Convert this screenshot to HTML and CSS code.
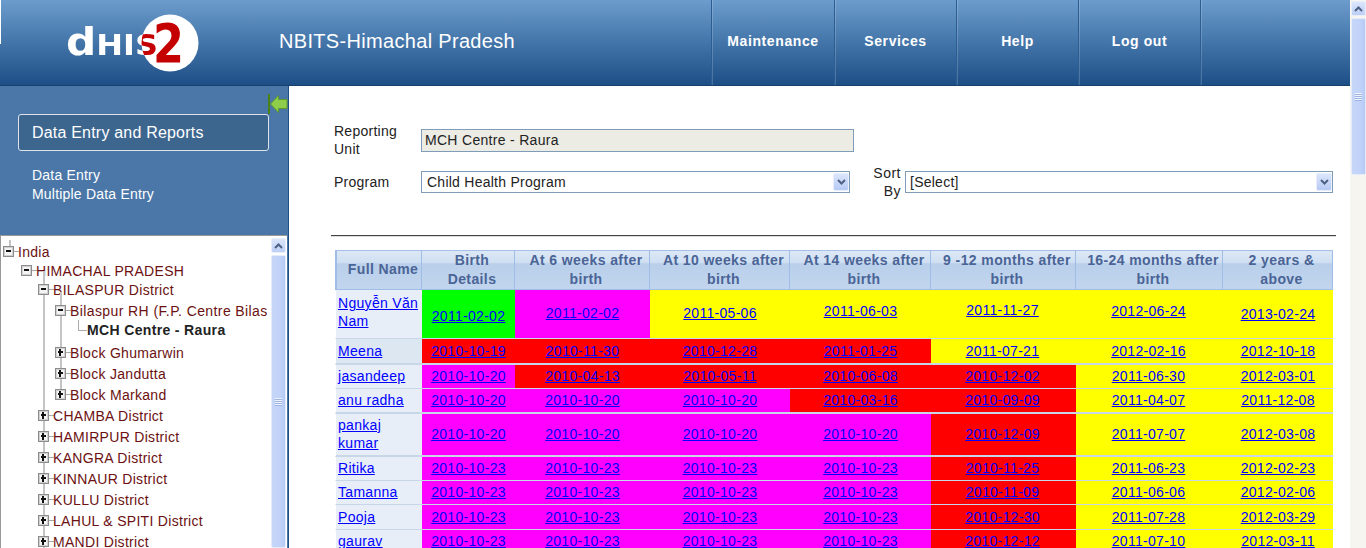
FILE: index.html
```html
<!DOCTYPE html>
<html lang="en">
<head>
    <meta charset="UTF-8">
    <title>NBITS-Himachal Pradesh</title>
    <link rel="stylesheet" href="styles.css">
</head>
<body>
<div class="page">
    <header class="header">
        <span class="corner-mark"></span>
        <div class="logo">
            <svg width="134" height="60" viewBox="0 0 134 60">
                <defs>
                    <clipPath id="logoCircle"><circle cx="104" cy="30" r="28.5"/></clipPath>
                </defs>
                <text class="logo-word" x="0" y="42" textLength="92" lengthAdjust="spacingAndGlyphs">d<tspan class="logo-caps">HIS</tspan></text>
                <circle cx="104" cy="30" r="28.5" fill="#fff"/>
                <g clip-path="url(#logoCircle)">
                    <text class="logo-word logo-word-red" x="0" y="42" textLength="92" lengthAdjust="spacingAndGlyphs">d<tspan class="logo-caps">HIS</tspan></text>
                </g>
                <text class="logo-two" x="87" y="49" textLength="31" lengthAdjust="spacingAndGlyphs">2</text>
            </svg>
        </div>
        <div class="title">NBITS-Himachal Pradesh</div>
        <nav class="nav">
            <a class="nav-item" href="#">Maintenance</a>
            <a class="nav-item" href="#">Services</a>
            <a class="nav-item" href="#">Help</a>
            <a class="nav-item" href="#">Log out</a>
            <span class="nav-item nav-end"></span>
        </nav>
    </header>

    <div class="content">
        <aside class="sidebar">
            <div class="side-top">
                <svg class="collapse-icon" width="20" height="20" viewBox="0 0 20 20">
                    <rect x="0" y="0" width="2" height="20" fill="#4c8018"/>
                    <polygon points="2.5,10 10.5,1.5 10.5,5.5 19,5.5 19,14.5 10.5,14.5 10.5,18.5" fill="#8fce4b" stroke="#5f9a26"/>
                </svg>
                <div class="menu-title">Data Entry and Reports</div>
                <a class="side-link" href="#">Data Entry</a>
                <a class="side-link" href="#">Multiple Data Entry</a>
            </div>
            <div class="tree-panel">
                <div class="tree">
                    <span class="top-stub"></span>
                    <div class="tree-row"><span class="box minus"></span><span class="dash"></span><a href="#">India</a></div>
                    <ul>
                        <li><div class="tree-row"><span class="box minus"></span><span class="dash"></span><a href="#">HIMACHAL PRADESH</a></div>
                            <ul class="lined">
                                <li><div class="tree-row"><span class="box minus"></span><span class="dash"></span><a href="#">BILASPUR District</a></div>
                                    <ul class="lined lined-end">
                                        <li><div class="tree-row gap-small wide-row"><span class="box minus"></span><span class="dash"></span><a href="#">Bilaspur RH (F.P. Centre Bilaspur)</a></div>
                                            <ul>
                                                <li><div class="tree-row"><span class="leaf"></span><a class="current" href="#">MCH Centre - Raura</a></div></li>
                                            </ul>
                                        </li>
                                        <li><div class="tree-row tall gap-large"><span class="box plus"></span><span class="dash"></span><a href="#">Block Ghumarwin</a></div></li>
                                        <li><div class="tree-row tall"><span class="box plus"></span><span class="dash"></span><a href="#">Block Jandutta</a></div></li>
                                        <li><div class="tree-row tall"><span class="box plus"></span><span class="dash"></span><a href="#">Block Markand</a></div></li>
                                    </ul>
                                </li>
                                <li><div class="tree-row tall"><span class="box plus"></span><span class="dash"></span><a href="#">CHAMBA District</a></div></li>
                                <li><div class="tree-row tall"><span class="box plus"></span><span class="dash"></span><a href="#">HAMIRPUR District</a></div></li>
                                <li><div class="tree-row tall"><span class="box plus"></span><span class="dash"></span><a href="#">KANGRA District</a></div></li>
                                <li><div class="tree-row tall"><span class="box plus"></span><span class="dash"></span><a href="#">KINNAUR District</a></div></li>
                                <li><div class="tree-row tall"><span class="box plus"></span><span class="dash"></span><a href="#">KULLU District</a></div></li>
                                <li><div class="tree-row tall"><span class="box plus"></span><span class="dash"></span><a href="#">LAHUL &amp; SPITI District</a></div></li>
                                <li><div class="tree-row tall"><span class="box plus"></span><span class="dash"></span><a href="#">MANDI District</a></div></li>
                            </ul>
                        </li>
                    </ul>
                </div>
                <div class="scrollbar tree-scroll">
                    <div class="scroll-btn">
                        <svg width="9" height="6" viewBox="0 0 9 6"><path d="M1 5 L4.5 1.5 L8 5" fill="none" stroke="#4d6185" stroke-width="2"/></svg>
                    </div>
                    <div class="scroll-thumb"><span class="grip"></span></div>
                </div>
            </div>
        </aside>

        <main class="main">
            <form class="entry-form">
                <div class="form-row">
                    <label class="field-label">Reporting Unit</label>
                    <input class="unit-input" type="text" value="MCH Centre - Raura" readonly>
                </div>
                <div class="form-row">
                    <label class="field-label">Program</label>
                    <div class="select-box program-select">
                        <select><option>Child Health Program</option></select>
                        <span class="select-arrow"><svg width="9" height="6" viewBox="0 0 9 6"><path d="M1 1 L4.5 4.5 L8 1" fill="none" stroke="#4d6185" stroke-width="2"/></svg></span>
                    </div>
                    <label class="field-label sort-label">Sort By</label>
                    <div class="select-box sort-select">
                        <select><option>[Select]</option></select>
                        <span class="select-arrow"><svg width="9" height="6" viewBox="0 0 9 6"><path d="M1 1 L4.5 4.5 L8 1" fill="none" stroke="#4d6185" stroke-width="2"/></svg></span>
                    </div>
                </div>
            </form>

            <hr class="rule">

            <table class="schedule">
                <colgroup>
                    <col class="col-name"><col class="col-birth"><col class="col-6w"><col class="col-10w">
                    <col class="col-14w"><col class="col-9m"><col class="col-16m"><col class="col-2y">
                </colgroup>
                <thead>
                    <tr>
                        <th>Full Name</th>
                        <th>Birth Details</th>
                        <th>At 6 weeks after birth</th>
                        <th>At 10 weeks after birth</th>
                        <th>At 14 weeks after birth</th>
                        <th>9 -12 months after birth</th>
                        <th>16-24 months after birth</th>
                        <th>2 years &amp; above</th>
                    </tr>
                </thead>
                <tbody>
                    <tr class="row-49">
                        <td class="name"><a href="#">Nguyễn Văn Nam</a></td>
                        <td class="green low-2"><a href="#">2011-02-02</a></td>
                        <td class="magenta"><a href="#">2011-02-02</a></td>
                        <td class="yellow"><a href="#">2011-05-06</a></td>
                        <td class="yellow high-2"><a href="#">2011-06-03</a></td>
                        <td class="yellow high-3"><a href="#">2011-11-27</a></td>
                        <td class="yellow high-2"><a href="#">2012-06-24</a></td>
                        <td class="yellow low-1"><a href="#">2013-02-24</a></td>
                    </tr>
                    <tr class="row-26 thick alt flush">
                        <td class="name"><a href="#">Meena</a></td>
                        <td class="red"><a href="#">2010-10-19</a></td>
                        <td class="red"><a href="#">2010-11-30</a></td>
                        <td class="red"><a href="#">2010-12-28</a></td>
                        <td class="red"><a href="#">2011-01-25</a></td>
                        <td class="yellow"><a href="#">2011-07-21</a></td>
                        <td class="yellow"><a href="#">2012-02-16</a></td>
                        <td class="yellow"><a href="#">2012-10-18</a></td>
                    </tr>
                    <tr class="row-24">
                        <td class="name"><a href="#">jasandeep</a></td>
                        <td class="magenta"><a href="#">2010-10-20</a></td>
                        <td class="red"><a href="#">2010-04-13</a></td>
                        <td class="red"><a href="#">2010-05-11</a></td>
                        <td class="red"><a href="#">2010-06-08</a></td>
                        <td class="red"><a href="#">2010-12-02</a></td>
                        <td class="yellow"><a href="#">2011-06-30</a></td>
                        <td class="yellow"><a href="#">2012-03-01</a></td>
                    </tr>
                    <tr class="row-25 thick">
                        <td class="name"><a href="#">anu radha</a></td>
                        <td class="magenta"><a href="#">2010-10-20</a></td>
                        <td class="magenta"><a href="#">2010-10-20</a></td>
                        <td class="magenta"><a href="#">2010-10-20</a></td>
                        <td class="red"><a href="#">2010-03-16</a></td>
                        <td class="red"><a href="#">2010-09-09</a></td>
                        <td class="yellow"><a href="#">2011-04-07</a></td>
                        <td class="yellow"><a href="#">2011-12-08</a></td>
                    </tr>
                    <tr class="row-43 thick">
                        <td class="name"><a href="#">pankaj kumar</a></td>
                        <td class="magenta"><a href="#">2010-10-20</a></td>
                        <td class="magenta"><a href="#">2010-10-20</a></td>
                        <td class="magenta"><a href="#">2010-10-20</a></td>
                        <td class="magenta"><a href="#">2010-10-20</a></td>
                        <td class="red"><a href="#">2010-12-09</a></td>
                        <td class="yellow"><a href="#">2011-07-07</a></td>
                        <td class="yellow"><a href="#">2012-03-08</a></td>
                    </tr>
                    <tr class="row-24">
                        <td class="name"><a href="#">Ritika</a></td>
                        <td class="magenta"><a href="#">2010-10-23</a></td>
                        <td class="magenta"><a href="#">2010-10-23</a></td>
                        <td class="magenta"><a href="#">2010-10-23</a></td>
                        <td class="magenta"><a href="#">2010-10-23</a></td>
                        <td class="red"><a href="#">2010-11-25</a></td>
                        <td class="yellow"><a href="#">2011-06-23</a></td>
                        <td class="yellow"><a href="#">2012-02-23</a></td>
                    </tr>
                    <tr class="row-24">
                        <td class="name"><a href="#">Tamanna</a></td>
                        <td class="magenta"><a href="#">2010-10-23</a></td>
                        <td class="magenta"><a href="#">2010-10-23</a></td>
                        <td class="magenta"><a href="#">2010-10-23</a></td>
                        <td class="magenta"><a href="#">2010-10-23</a></td>
                        <td class="red"><a href="#">2010-11-09</a></td>
                        <td class="yellow"><a href="#">2011-06-06</a></td>
                        <td class="yellow"><a href="#">2012-02-06</a></td>
                    </tr>
                    <tr class="row-25 flush">
                        <td class="name"><a href="#">Pooja</a></td>
                        <td class="magenta"><a href="#">2010-10-23</a></td>
                        <td class="magenta"><a href="#">2010-10-23</a></td>
                        <td class="magenta"><a href="#">2010-10-23</a></td>
                        <td class="magenta"><a href="#">2010-10-23</a></td>
                        <td class="red"><a href="#">2010-12-30</a></td>
                        <td class="yellow"><a href="#">2011-07-28</a></td>
                        <td class="yellow"><a href="#">2012-03-29</a></td>
                    </tr>
                    <tr class="row-24">
                        <td class="name"><a href="#">gaurav</a></td>
                        <td class="magenta"><a href="#">2010-10-23</a></td>
                        <td class="magenta"><a href="#">2010-10-23</a></td>
                        <td class="magenta"><a href="#">2010-10-23</a></td>
                        <td class="magenta"><a href="#">2010-10-23</a></td>
                        <td class="red"><a href="#">2010-12-12</a></td>
                        <td class="yellow"><a href="#">2011-07-10</a></td>
                        <td class="yellow"><a href="#">2012-03-11</a></td>
                    </tr>
                </tbody>
            </table>
        </main>
    </div>
</div>

<div class="scrollbar page-scroll">
    <div class="scroll-btn">
        <svg width="9" height="6" viewBox="0 0 9 6"><path d="M1 5 L4.5 1.5 L8 5" fill="none" stroke="#4d6185" stroke-width="2"/></svg>
    </div>
    <div class="scroll-thumb"><span class="grip"></span></div>
</div>
</body>
</html>
```

FILE: styles.css
```css
/* General Styles */
* {
    box-sizing: border-box;
}

body {
    font-family: "Liberation Sans", Arial, sans-serif;
    font-size: 14px;
    margin: 0;
    height: 100vh;
    display: flex;
    overflow: hidden;
    background-color: #fff;
    color: #222;
}

.page {
    flex: 1;
    min-width: 0;
    display: flex;
    flex-direction: column;
}

/* Header */
.header {
    position: relative;
    flex: none;
    height: 86px;
    display: flex;
    align-items: center;
    background: linear-gradient(#6b9ccc, #1d4e86);
    border-bottom: 1px solid #17406f;
    color: #fff;
}

.corner-mark {
    position: absolute;
    left: 0;
    top: 0;
    width: 1px;
    height: 44px;
    background-color: #fff;
}

.logo {
    flex: none;
    width: 279px;
    padding-left: 66px;
    height: 60px;
}

.logo svg {
    display: block;
    filter: blur(0.4px);
}

.logo-word {
    font-family: "DejaVu Sans", sans-serif;
    font-size: 37px;
    font-weight: bold;
    fill: #fff;
}

.logo-word-red {
    fill: #c40000;
}

.logo-caps {
    font-size: 28px;
}

.logo-two {
    font-family: "DejaVu Sans", sans-serif;
    font-size: 53px;
    font-weight: bold;
    fill: #c40000;
}

.title {
    flex: 1;
    font-size: 20px;
    letter-spacing: 0.32px;
    padding-bottom: 2px;
}

.nav {
    flex: none;
    display: flex;
    height: 85px;
}

.nav-item {
    width: 122px;
    display: flex;
    align-items: center;
    justify-content: center;
    padding-bottom: 4px;
    color: #fff;
    font-weight: bold;
    font-size: 14px;
    letter-spacing: 0.6px;
    text-decoration: none;
    border-left: 1px solid #2c5c92;
    box-shadow: inset 1px 0 0 rgba(255, 255, 255, 0.18);
}

.nav-item:first-child {
    width: 123px;
}

.nav-end {
    width: 150px;
}

/* Layout under the header */
.content {
    flex: 1;
    min-height: 0;
    display: flex;
}

/* Sidebar */
.sidebar {
    flex: none;
    width: 289px;
    display: flex;
    flex-direction: column;
    background-color: #4a77a8;
    border-right: 1px solid #1d4e86;
}

.side-top {
    position: relative;
    flex: none;
    height: 149px;
    padding: 28px 0 0 18px;
}

.collapse-icon {
    position: absolute;
    left: 268px;
    top: 8px;
}

.menu-title {
    width: 251px;
    height: 37px;
    line-height: 35px;
    padding-left: 13px;
    font-size: 16px;
    letter-spacing: 0.2px;
    color: #fff;
    background-color: #3d668f;
    border: 1px solid #dde4ec;
    border-radius: 3px;
    margin-bottom: 15px;
}

.side-link {
    display: block;
    margin-left: 14px;
    line-height: 19px;
    letter-spacing: 0.2px;
    color: #fff;
    text-decoration: none;
}

/* Organisation tree */
.tree-panel {
    flex: 1;
    min-height: 0;
    margin-right: 1px;
    display: flex;
    background-color: #fff;
    border-top: 1px solid #999;
    border-left: 1px solid #999;
    overflow: hidden;
}

.tree {
    position: relative;
    flex: 1;
    min-width: 0;
    margin-right: 3px;
    padding: 6px 0 0 2px;
    overflow: hidden;
    white-space: nowrap;
}

.tree ul {
    list-style: none;
    margin: 0;
    padding: 0 0 0 17px;
    position: relative;
}

.tree > ul {
    padding-left: 18px;
}

.tree li {
    margin: 0;
    padding: 0;
}

.tree a {
    color: #6b1111;
    letter-spacing: 0.3px;
    text-decoration: none;
}

.tree .wide-row a {
    letter-spacing: 0.4px;
}

.tree a.current {
    color: #222;
    font-weight: bold;
    letter-spacing: 0.35px;
}

.tree-row {
    display: flex;
    align-items: center;
    height: 19px;
}

.tall {
    height: 21px;
}

.gap-small {
    margin-top: 2px;
}

.gap-large {
    margin-top: 3px;
}

/* vertical guide running through the boxes of one level */
.lined::before {
    content: "";
    position: absolute;
    left: 22px;
    top: -9px;
    bottom: 0;
    width: 2px;
    background-color: #c4c4c4;
}

.lined-end::before {
    bottom: 10px;
}

.top-stub {
    position: absolute;
    left: 8px;
    top: 4px;
    width: 2px;
    height: 8px;
    background-color: #c4c4c4;
}

.box {
    position: relative;
    flex: none;
    width: 11px;
    height: 11px;
    border: 1px solid #8c8c8c;
    background-color: #f4f4f4;
    box-shadow: inset 0 0 0 1px #d0d0d0;
}

.box::before {
    content: "";
    position: absolute;
    left: 2px;
    right: 2px;
    top: 3px;
    height: 2px;
    background-color: #111;
}

.plus::after {
    content: "";
    position: absolute;
    top: 1px;
    bottom: 1px;
    left: 3px;
    width: 2px;
    background-color: #111;
}

.dash {
    flex: none;
    width: 5px;
    height: 1px;
    margin-right: -1px;
    background-color: #aaa;
}

.leaf {
    flex: none;
    width: 9px;
    height: 11px;
    margin: -8px 0 0 6px;
    border-left: 1px solid #aaa;
    border-bottom: 1px solid #aaa;
}

/* XP style scrollbars */
.scrollbar {
    flex: none;
    width: 16px;
    display: flex;
    flex-direction: column;
    align-items: center;
    background-color: #f6f5ef;
}

.tree-scroll {
    margin-top: 1px;
    background-color: #fff;
    padding-right: 1px;
}

.scroll-btn {
    flex: none;
    width: 15px;
    height: 15px;
    margin-top: 1px;
    display: flex;
    align-items: center;
    justify-content: center;
    background: linear-gradient(#dbe6fb, #bdcff5);
    border: 1px solid #e8eefc;
    border-radius: 2px;
}

.scroll-thumb {
    width: 15px;
    display: flex;
    align-items: center;
    justify-content: center;
    background: linear-gradient(90deg, #c6d6f8, #c1d3f8 60%, #b6caf5);
    border: 1px solid #e4ebfb;
    border-radius: 2px;
    margin-top: 2px;
}

.tree-scroll .scroll-thumb {
    flex: 1;
}

.page-scroll .scroll-thumb {
    height: 157px;
}

.grip {
    width: 7px;
    height: 8px;
    background: repeating-linear-gradient(#eef3fe 0, #eef3fe 1px, #9db4e4 1px, #9db4e4 2px);
}

/* Main area */
.main {
    flex: 1;
    min-width: 0;
    padding: 36px 0 0 42px;
    background-color: #fff;
}

.entry-form {
    display: flex;
    flex-direction: column;
    gap: 6px;
    margin-left: 3px;
}

.form-row {
    display: flex;
    align-items: center;
    line-height: 18px;
}

.field-label {
    flex: none;
    width: 87px;
    padding-right: 20px;
    letter-spacing: 0.25px;
}

.unit-input {
    width: 433px;
    height: 23px;
    padding: 0 3px;
    font: 14px "Liberation Sans", Arial, sans-serif;
    letter-spacing: 0.3px;
    color: #222;
    background-color: #ecebe4;
    border: 1px solid #7f9db9;
    outline: none;
}

.select-box {
    position: relative;
    height: 22px;
}

.program-select {
    width: 429px;
}

.sort-select {
    width: 428px;
}

.select-box select {
    appearance: none;
    display: block;
    width: 100%;
    height: 100%;
    padding: 0 20px 0 5px;
    font: 14px "Liberation Sans", Arial, sans-serif;
    letter-spacing: 0.25px;
    color: #222;
    background-color: #fff;
    border: 1px solid #7f9db9;
    border-radius: 0;
}

.sort-select select {
    padding-left: 4px;
}

.select-arrow {
    position: absolute;
    right: 1px;
    top: 2px;
    width: 16px;
    height: 18px;
    display: flex;
    align-items: center;
    justify-content: center;
    background: linear-gradient(#dbe6fb, #b7caf5);
    border: 1px solid #e8eefc;
    border-radius: 2px;
}

.sort-label {
    width: 28px;
    padding: 0;
    margin: 0 4px 0 23px;
    text-align: right;
    letter-spacing: 0.5px;
}

.rule {
    height: 2px;
    width: 1005px;
    margin: 35px 0 13px 0;
    border: none;
    border-top: 1px solid #444;
    border-bottom: 1px solid #ddd;
}

/* Schedule table */
.schedule {
    table-layout: fixed;
    width: 998px;
    margin-left: 4px;
    border-collapse: separate;
    border-spacing: 0;
}

.col-name { width: 87px; }
.col-birth { width: 93px; }
.col-6w { width: 135px; }
.col-10w { width: 140px; }
.col-14w { width: 141px; }
.col-9m { width: 145px; }
.col-16m { width: 147px; }
.col-2y { width: 110px; }

.schedule th {
    height: 40px;
    padding: 0 0 0 8px;
    font-size: 14px;
    line-height: 19px;
    letter-spacing: 0.4px;
    color: #4a6496;
    background: linear-gradient(#dde8f6, #cfdff2 30%, #b9cfea 34%, #c2d5ee);
    border-top: 1px solid #a4c0e8;
    border-right: 1px solid #9fbde6;
    border-bottom: 1px solid #9fbde6;
}

.schedule th:first-child {
    padding-bottom: 2px;
    border-left: 2px solid #9fbde6;
}

.schedule td {
    padding: 0 0 2px;
    text-align: center;
    line-height: 18px;
    border-bottom: 1px solid #c8d6e8;
}

.schedule td:nth-child(6),
.schedule td:nth-child(7) {
    padding-right: 2px;
}

.schedule a {
    color: #00f;
    letter-spacing: 0.3px;
}

.schedule .name {
    text-align: left;
    padding-left: 2px;
    background-color: #e8eef7;
    border-left: 1px solid #fff;
}

.row-49 .name {
    padding-bottom: 4px;
}

.alt .name {
    background-color: #dde7f2;
}

.thick td {
    border-bottom-width: 2px;
}

.flush td {
    padding-bottom: 0;
}

.row-49 td { height: 49px; }
.row-43 td { height: 43px; }
.row-26 td { height: 26px; }
.row-25 td { height: 25px; }
.row-24 td { height: 24px; }

.green { background-color: #0f0; }
.magenta { background-color: #f0f; }
.yellow { background-color: #ff0; }
.red { background-color: #f00; }

/* the first row's dates do not sit on one line */
.schedule .low-2 { padding-top: 4px; padding-bottom: 0; }
.schedule .low-1 { padding-bottom: 0; }
.schedule .high-2 { padding-bottom: 6px; }
.schedule .high-3 { padding-bottom: 8px; }
```
